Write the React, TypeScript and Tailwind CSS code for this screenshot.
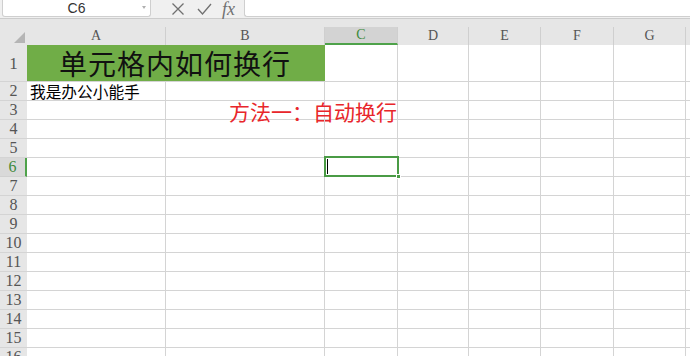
import React from "react";

const cols = [
  { name: "A", w: "w-[139px]" },
  { name: "B", w: "w-[159px]" },
  { name: "C", w: "w-[73px]" },
  { name: "D", w: "w-[71px]" },
  { name: "E", w: "w-[72px]" },
  { name: "F", w: "w-[73px]" },
  { name: "G", w: "w-[72px]" },
  { name: "", w: "w-[40px]" },
];

const cjk = { fontFamily: '"Noto Sans CJK SC", "Noto Sans", sans-serif' };
const serif = { fontFamily: '"Liberation Serif", "DejaVu Serif", serif' };

function TopBar() {
  return (
    <div className="flex h-[18px] bg-[#f0f0f0]">
      <div className="ml-[2px] w-[149px] shrink-0 h-[17px] bg-white border border-t-0 border-[#cfcfcf] rounded-b-[3px] relative flex items-center justify-center">
        <span className="text-[14px] text-[#333] leading-none" style={{ fontFamily: '"Liberation Sans", Arial, sans-serif' }}>C6</span>
        <span className="absolute right-[4px] top-[6px] w-0 h-0 border-l-[2px] border-r-[2px] border-t-[3px] border-l-transparent border-r-transparent border-t-[#b0b0b0]" />
      </div>
      <div className="flex items-center ml-[20px] text-[#707070] shrink-0">
        <svg width="14" height="14" viewBox="0 0 14 14">
          <path d="M1.5 1.5 L12.5 12.5 M12.5 1.5 L1.5 12.5" stroke="#707070" strokeWidth="1.3" fill="none" />
        </svg>
        <svg className="ml-[12px]" width="15" height="14" viewBox="0 0 15 14">
          <path d="M1 7 L5.5 12 L14 2" stroke="#707070" strokeWidth="1.3" fill="none" />
        </svg>
        <span className="ml-[10px] italic text-[18px] leading-[18px] text-[#707070]" style={serif}>fx</span>
      </div>
      <div className="ml-[9px] flex-1 h-[17px] bg-white border border-t-0 border-r-0 border-[#cfcfcf] rounded-bl-[3px]" />
    </div>
  );
}

function HeaderRow() {
  return (
    <div className="flex h-[27px] bg-[#e6e6e6] border-t border-[#cccccc] overflow-hidden">
      <div className="w-[27px] shrink-0 h-full relative">
        <svg className="absolute left-[14px] top-[13px]" width="11" height="11" viewBox="0 0 11 11">
          <path d="M11 0 L11 11 L0 11 Z" fill="#b5b5b5" />
        </svg>
      </div>
      {cols.map((c, i) => {
        const sel = c.name === "C";
        return (
          <div key={i} className={`${c.w} shrink-0 h-full flex flex-col`}>
            <div className="h-[8px]" />
            <div
              className={`flex-1 flex items-center justify-center border-r border-[#cfcfcf] ${
                sel ? "bg-[#d3d3d3] border-b-2 border-b-[#4ea24a] text-[#3d8a3a]" : "text-[#555]"
              }`}
            >
              <span className="text-[14px] leading-none" style={serif}>{c.name}</span>
            </div>
          </div>
        );
      })}
    </div>
  );
}

function Row({ n, h }: { n: number; h: string }) {
  const sel = n === 6;
  return (
    <div className={`flex ${h}`}>
      <div
        className={`w-[27px] shrink-0 flex items-center justify-center border-b ${
          sel ? "bg-[#d9d9d9] text-[#3d8a3a] border-r-2 border-r-[#4ea24a] border-b-[#d0d0d0]" : "bg-[#e6e6e6] text-[#555] border-b-[#d4d4d4]"
        }`}
      >
        <span className={`${n === 1 ? "text-[17px]" : "text-[16px]"} leading-none`} style={serif}>{n}</span>
      </div>
      {n === 1 ? (
        <>
          <div className="w-[298px] shrink-0 bg-[#70ad47] border-b border-[#d4d4d4] flex items-center justify-center">
            <span className="text-[28px] leading-none text-[#111] tracking-[1px] -ml-[2px]" style={cjk}>单元格内如何换行</span>
          </div>
          {cols.slice(2).map((c, i) => (
            <div key={i} className={`${c.w} shrink-0 border-r border-b border-[#d4d4d4]`} />
          ))}
        </>
      ) : (
        cols.map((c, i) => {
          const isSel = sel && c.name === "C";
          return (
            <div key={i} className={`${c.w} shrink-0 border-r border-b border-[#d4d4d4] relative`}>
              {n === 2 && c.name === "A" && (
                <span className="absolute left-[3px] top-[1px] text-[15.7px] leading-[17px] text-black whitespace-nowrap" style={cjk}>
                  我是办公小能手
                </span>
              )}
              {n === 3 && c.name === "C" && (
                <span className="absolute right-0 -top-[1px] text-[21px] leading-[22px] text-[#e8262b] whitespace-nowrap" style={cjk}>
                  方法一：自动换行
                </span>
              )}
              {isSel && (
                <div className="absolute -left-px -top-[2px] w-[75px] h-[21px] border-2 border-[#4a9b45] z-10">
                  <div className="absolute left-[1px] top-[1px] w-px h-[15px] bg-black" />
                  <div className="absolute -right-[4px] -bottom-[4px] w-[5px] h-[5px] bg-[#4a9b45] border border-white" />
                </div>
              )}
            </div>
          );
        })
      )}
    </div>
  );
}

export default function App() {
  const rows = Array.from({ length: 16 }, (_, i) => i + 1);
  return (
    <div className="w-[690px] h-[356px] overflow-hidden bg-white select-none">
      <TopBar />
      <HeaderRow />
      {rows.map((n) => (
        <Row key={n} n={n} h={n === 1 ? "h-[37px]" : "h-[19px]"} />
      ))}
    </div>
  );
}
